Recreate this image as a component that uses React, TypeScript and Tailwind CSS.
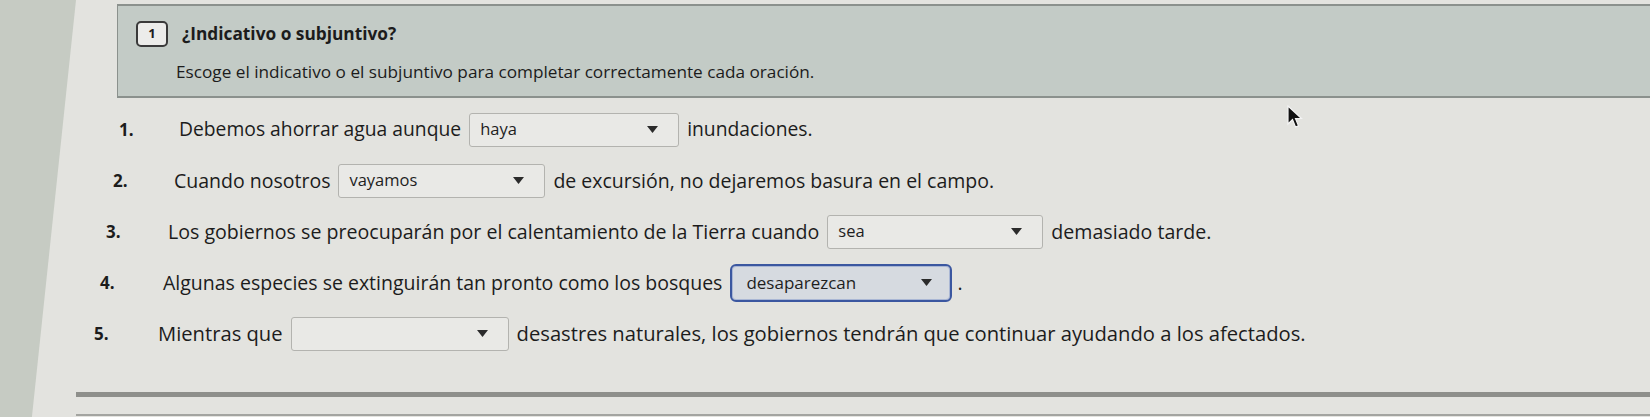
import React from 'react';

type Row = {
  n: number;
  ml: string;
  numW: string;
  size: string;
  before: string;
  value: string;
  after: string;
  selW: string;
  focused?: boolean;
};

const rows: Row[] = [
  { n: 1, ml: 'ml-[43px]', numW: 'w-[60px]', size: 'text-[19.3px]', before: 'Debemos ahorrar agua aunque', value: 'haya', after: 'inundaciones.', selW: 'w-[210px]' },
  { n: 2, ml: 'ml-[37px]', numW: 'w-[61px]', size: 'text-[19.5px]', before: 'Cuando nosotros', value: 'vayamos', after: 'de excursión, no dejaremos basura en el campo.', selW: 'w-[207px]' },
  { n: 3, ml: 'ml-[30px]', numW: 'w-[62px]', size: 'text-[19.6px]', before: 'Los gobiernos se preocuparán por el calentamiento de la Tierra cuando', value: 'sea', after: 'demasiado tarde.', selW: 'w-[216px]' },
  { n: 4, ml: 'ml-[24px]', numW: 'w-[63px]', size: 'text-[19.5px]', before: 'Algunas especies se extinguirán tan pronto como los bosques', value: 'desaparezcan', after: '.', selW: 'w-[222px]', focused: true },
  { n: 5, ml: 'ml-[18px]', numW: 'w-[64px]', size: 'text-[20.2px]', before: 'Mientras que', value: '', after: 'desastres naturales, los gobiernos tendrán que continuar ayudando a los afectados.', selW: 'w-[218px]' },
];

const Caret = () => (
  <svg width="11" height="7" viewBox="0 0 11 7" className="shrink-0">
    <path d="M0 0 L11 0 L5.5 7 Z" fill="#2b2b2b" />
  </svg>
);

const Select: React.FC<{ value: string; w: string; focused?: boolean }> = ({ value, w, focused }) => (
  <div
    className={
      focused
        ? `${w} h-[38px] ml-[8px] mr-[5px] flex items-center justify-between pl-[14px] pr-[18px] rounded-[6px] border-2 border-[#3b57a0] bg-[#d6dae0] shadow-[inset_0_0_0_1px_#a9b6d4]`
        : `${w} h-[34px] mx-[8px] flex items-center justify-between pl-[10px] pr-[20px] rounded-[3px] border border-[#b3b3af] bg-[#e9e9e6]`
    }
  >
    <span className={focused ? 'text-[17px] text-[#1e1e1e]' : 'text-[16.5px] text-[#1e1e1e]'}>{value}</span>
    <Caret />
  </div>
);

export default function App() {
  return (
    <div className="w-[1650px] h-[417px] overflow-hidden relative bg-[#e3e3df] flex font-['Open_Sans','Liberation_Sans',sans-serif] text-[#1c1c1c]">
      {/* left page margin, slanted by the camera */}
      <div className="w-[76px] shrink-0 bg-[#c6cbc3] [clip-path:polygon(0_0,100%_0,42%_100%,0_100%)]" />

      <div className="flex-1 flex flex-col">
        {/* instructions header */}
        <div className="ml-[41px] mt-[4px] h-[94px] bg-[#c3cbc6] border-t-2 border-b-2 border-l border-[#8b918d] flex flex-col pl-[18px] pt-[15px]">
          <div className="flex items-center">
            <div className="w-[32px] h-[26px] rounded-[5px] border-2 border-[#3a3a3a] bg-[#ececea] flex items-center justify-center text-[13px] font-bold">
              1
            </div>
            <span className="ml-[14px] text-[17.3px] font-bold leading-[26px]">¿Indicativo o subjuntivo?</span>
          </div>
          <p className="mt-[12px] ml-[40px] text-[17.2px] leading-[25px]">
            Escoge el indicativo o el subjuntivo para completar correctamente cada oración.
          </p>
        </div>

        {/* questions */}
        <div className="flex flex-col mt-[6px]">
          {rows.map((r) => (
            <div key={r.n} className={`${r.ml} h-[51px] flex items-center ${r.size}`}>
              <span className={`${r.numW} shrink-0 font-bold text-[17px]`}>{r.n}.</span>
              <span>{r.before}</span>
              <Select value={r.value} w={r.selW} focused={r.focused} />
              <span>{r.after}</span>
            </div>
          ))}
        </div>

        <div className="mt-[33px] h-[5px] bg-[#8e8f8b]" />
        <div className="mt-[17px] h-[2px] bg-[#a3a4a0]" />
      </div>

      {/* mouse cursor */}
      <svg className="absolute left-[1287px] top-[105px]" width="16" height="24" viewBox="0 0 16 24">
        <path d="M1 1 L1 19 L5.5 14.5 L8.5 22 L11.5 20.8 L8.5 13.5 L14.5 13.5 Z" fill="#111" stroke="#f4f4f4" strokeWidth="1.2" />
      </svg>
    </div>
  );
}
